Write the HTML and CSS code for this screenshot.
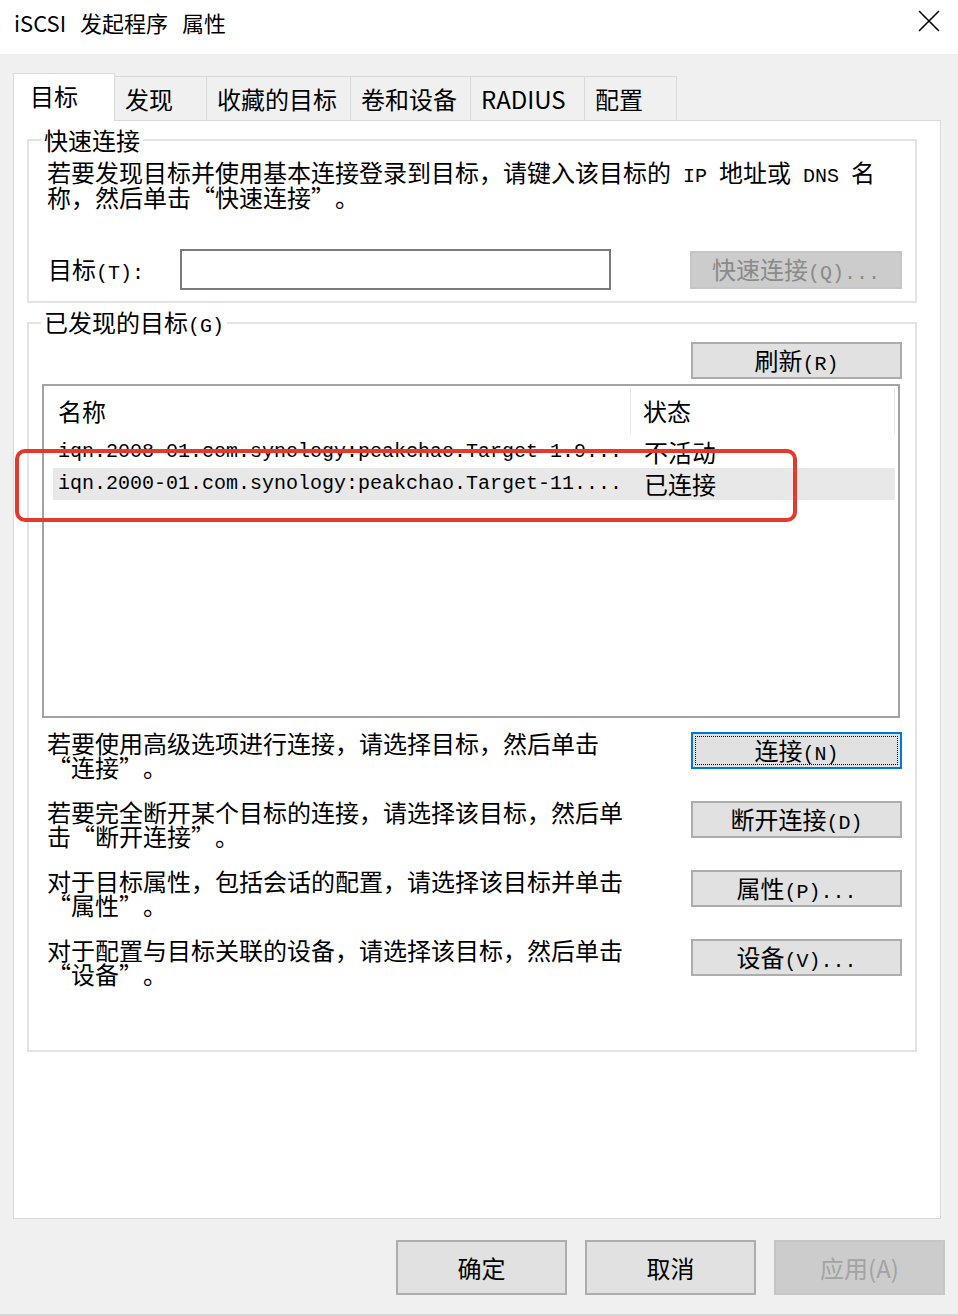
FILE: index.html
```html
<!DOCTYPE html>
<html lang="zh-CN">
<head>
    <meta charset="UTF-8">
    <meta name="viewport" content="width=device-width, initial-scale=1.0">
    <title>iSCSI 发起程序 属性</title>
    <link rel="stylesheet" href="styles.css">
</head>
<body>
    <div class="dialog">
        <div class="titlebar">
            <span class="title">iSCSI 发起程序 属性</span>
            <svg class="close" width="22" height="22" viewBox="0 0 22 22">
                <path d="M1 1L21 21M21 1L1 21" stroke="#000" stroke-width="1.6" fill="none"/>
            </svg>
        </div>

        <div class="main">
            <div class="tabs">
                <div class="tab active t-target">目标</div>
                <div class="tab t-find">发现</div>
                <div class="tab t-fav">收藏的目标</div>
                <div class="tab t-vol">卷和设备</div>
                <div class="tab t-radius">RADIUS</div>
                <div class="tab t-conf">配置</div>
            </div>

            <div class="panel">
                <fieldset class="group quick">
                    <legend>快速连接</legend>
                    <p class="hint">若要发现目标并使用基本连接登录到目标，请键入该目标的<span class="asc"> IP </span>地址或<span class="asc"> DNS </span>名<br>称，然后单击<span class="ql">“</span>快速连接<span class="qr">”</span>。</p>
                    <div class="target-row">
                        <label class="target-label">目标<span class="asc">(T):</span></label>
                        <input type="text" class="target-input">
                        <button class="btn btn-quick" disabled>快速连接<span class="asc">(Q)...</span></button>
                    </div>
                </fieldset>

                <fieldset class="group found">
                    <legend>已发现的目标<span class="asc">(G)</span></legend>
                    <div class="refresh-row">
                        <button class="btn">刷新<span class="asc">(R)</span></button>
                    </div>

                    <div class="listview">
                        <div class="lv-head">
                            <div class="col-name">名称</div>
                            <div class="col-state">状态</div>
                        </div>
                        <div class="lv-row">
                            <div class="col-name asc">iqn.2008-01.com.synology:peakchao.Target-1.9...</div>
                            <div class="col-state">不活动</div>
                        </div>
                        <div class="lv-row selected">
                            <div class="col-name asc">iqn.2000-01.com.synology:peakchao.Target-11....</div>
                            <div class="col-state">已连接</div>
                        </div>
                    </div>

                    <div class="actions">
                        <div class="action">
                            <p>若要使用高级选项进行连接，请选择目标，然后单击<br><span class="ql">“</span>连接<span class="qr">”</span>。</p>
                            <button class="btn default">连接<span class="asc">(N)</span></button>
                        </div>
                        <div class="action">
                            <p>若要完全断开某个目标的连接，请选择该目标，然后单<br>击<span class="ql">“</span>断开连接<span class="qr">”</span>。</p>
                            <button class="btn">断开连接<span class="asc">(D)</span></button>
                        </div>
                        <div class="action">
                            <p>对于目标属性，包括会话的配置，请选择该目标并单击<br><span class="ql">“</span>属性<span class="qr">”</span>。</p>
                            <button class="btn">属性<span class="asc">(P)...</span></button>
                        </div>
                        <div class="action">
                            <p>对于配置与目标关联的设备，请选择该目标，然后单击<br><span class="ql">“</span>设备<span class="qr">”</span>。</p>
                            <button class="btn">设备<span class="asc">(V)...</span></button>
                        </div>
                    </div>
                </fieldset>
            </div>
        </div>

        <div class="footer">
            <button class="btn btn-foot">确定</button>
            <button class="btn btn-foot">取消</button>
            <button class="btn btn-foot" disabled>应用(A)</button>
        </div>

        <!-- red annotation around the connected target -->
        <div class="mark"></div>
    </div>
</body>
</html>
```

FILE: styles.css
```css
* {
    box-sizing: border-box;
}
body {
    margin: 0;
    font-family: "Noto Sans CJK SC", sans-serif;
    color: #000;
}
.dialog {
    position: relative;
    width: 958px;
    height: 1316px;
    background-color: #f0f0f0;
    border-bottom: 2px solid #d6d6d6;
}
.titlebar {
    height: 54px;
    background-color: #fff;
    display: flex;
    justify-content: space-between;
    align-items: flex-start;
    padding: 8px 18px 0 14px;
}
.title {
    font-size: 22px;
    line-height: 28px;
    word-spacing: 9px;
}
.close {
    margin-top: 2px;
}
.asc {
    font-family: "Liberation Mono", monospace;
    font-size: 20px;
    line-height: 16px;
}
/* full-width quotation marks */
.ql, .qr {
    display: inline-block;
    width: 24px;
    line-height: 16px;
}
.ql {
    text-align: right;
}
.qr {
    text-align: left;
}

/* tabs */
.main {
    padding: 19px 0 0 13px;
}
.tabs {
    display: flex;
    align-items: flex-end;
    height: 48px;
    margin-bottom: -1px;
    position: relative;
    z-index: 1;
}
.tab {
    height: 44px;
    margin-bottom: 1px;
    margin-left: -1px;
    border: 1px solid #d9d9d9;
    border-bottom: none;
    background-color: #f0f0f0;
    display: flex;
    align-items: center;
    padding-left: 10px;
    font-size: 24px;
    line-height: 24px;
}
.tab.active {
    height: 48px;
    margin: 0;
    background-color: #fff;
    padding-left: 16px;
    padding-bottom: 4px;
}
.t-target { width: 102px; }
.t-find { width: 93px; }
.t-fav { width: 145px; }
.t-vol { width: 121px; }
.t-radius { width: 115px; }
.t-conf { width: 93px; }

.panel {
    width: 928px;
    height: 1099px;
    background-color: #fff;
    border: 1px solid #d9d9d9;
    padding: 7px 0 0 13px;
}

/* group boxes */
.group {
    margin: 0;
    min-width: 0;
    width: 890px;
    border: 2px solid #e3e3e3;
    padding: 8px 13px 11px 18px;
}
.group legend {
    font-size: 24px;
    line-height: 24px;
    padding: 0 3px;
    margin-left: -6px;
}
.hint {
    margin: 0;
    font-size: 24px;
    line-height: 24px;
}
.target-row {
    display: flex;
    align-items: center;
    margin-top: 40px;
}
.target-label {
    width: 133px;
    padding-left: 1px;
    font-size: 24px;
    line-height: 24px;
}
.target-input {
    width: 431px;
    height: 41px;
    border: 2px solid #7a7a7a;
    background-color: #fff;
}
.btn-quick {
    margin-left: auto;
    width: 212px !important;
    height: 38px !important;
}

.found {
    margin-top: 7px;
    padding: 7px 13px 64px 18px;
}
.refresh-row {
    display: flex;
    justify-content: flex-end;
}

/* buttons */
.btn {
    font-family: inherit;
    font-size: 24px;
    line-height: 24px;
    width: 211px;
    height: 37px;
    padding: 0;
    color: #000;
    background-color: #e1e1e1;
    border: 2px solid #adadad;
}
.btn:disabled {
    background-color: #cccccc;
    border-color: #c6c6c6;
    color: #8a8a8a;
}
.btn.default {
    border-color: #0078d7;
    outline: 1px dotted #000;
    outline-offset: -5px;
}

/* list view */
.listview {
    margin: 5px 2px 0 -5px;
    height: 334px;
    border: 2px solid #a3a3a3;
    overflow: hidden;
}
.lv-head {
    display: flex;
    height: 50px;
    font-size: 24px;
    line-height: 24px;
}
.lv-head > div {
    display: flex;
    align-items: center;
    border-right: 1px solid #e5e5e5;
    margin: 2px 0;
}
.lv-head .col-name {
    width: 587px;
    padding-left: 14px;
}
.lv-head .col-state {
    width: 264px;
    padding-left: 12px;
}
.lv-row {
    display: flex;
    align-items: center;
    height: 32px;
    margin-left: 9px;
    width: 842px;
}
.lv-row.selected {
    background-color: #e8e8e8;
}
.lv-row .col-name {
    width: 578px;
    padding-left: 5px;
    white-space: nowrap;
    overflow: hidden;
    line-height: 24px;
}
.lv-row .col-state {
    padding-left: 13px;
    font-size: 24px;
    line-height: 24px;
}

.actions {
    margin-top: 13px;
    display: flex;
    flex-direction: column;
    gap: 21px;
}
.action {
    display: flex;
    justify-content: space-between;
    align-items: flex-start;
}
.action p {
    margin: 0;
    width: 580px;
    font-size: 24px;
    line-height: 24px;
}
.action .btn {
    margin-top: 1px;
}

/* dialog buttons */
.footer {
    display: flex;
    justify-content: flex-end;
    gap: 18px;
    margin-top: 21px;
    padding-right: 13px;
}
.btn-foot {
    width: 171px;
    height: 55px;
}
.btn-foot:disabled {
    color: #a3a3a3;
}

.mark {
    position: absolute;
    left: 15px;
    top: 449px;
    width: 782px;
    height: 73px;
    border: 4px solid #e5392c;
    border-radius: 10px;
}
```
